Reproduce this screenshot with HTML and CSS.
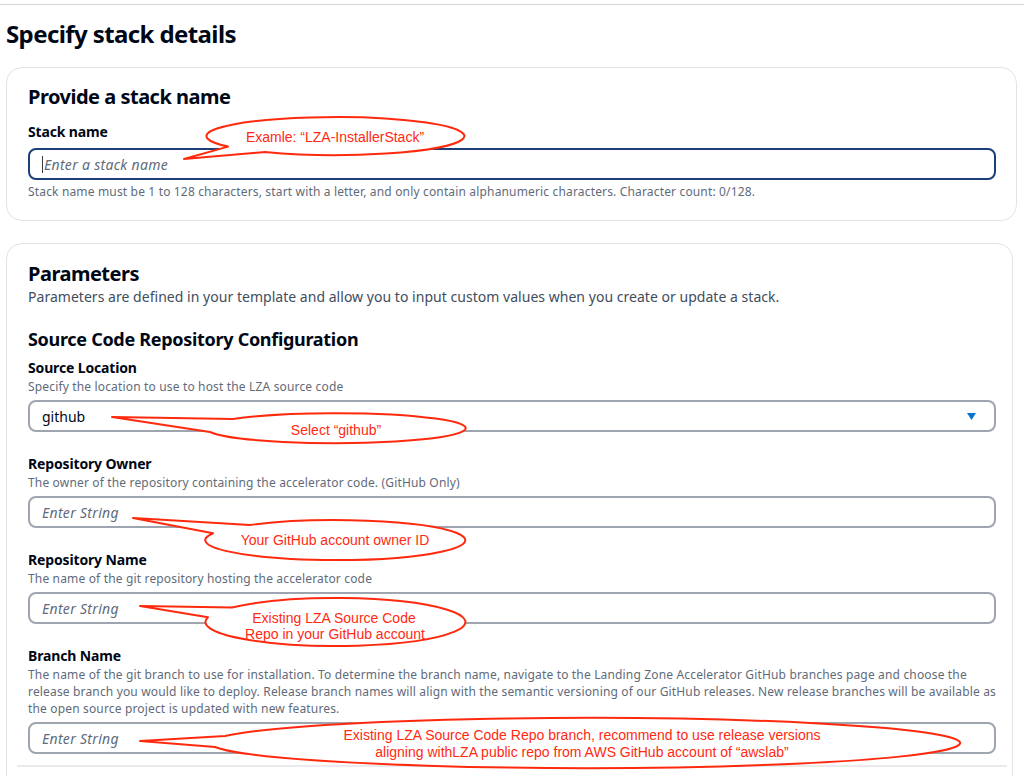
FILE: index.html
```html
<!DOCTYPE html>
<html lang="en">
<head>
<meta charset="utf-8">
<title>Specify stack details</title>
<link rel="stylesheet" href="styles.css">
</head>
<body>
<div class="page">
  <div class="topline"></div>
  <h1 class="title">Specify stack details</h1>

  <section class="card card-name">
    <h2 class="card-title">Provide a stack name</h2>
    <div class="field first">
      <div class="label">Stack name</div>
      <div class="input input-focus"><span class="caret"></span><span class="ph">Enter a stack name</span></div>
      <div class="help">Stack name must be 1 to 128 characters, start with a letter, and only contain alphanumeric characters. Character count: 0/128.</div>
    </div>
  </section>

  <section class="card card-params">
    <h2 class="card-title">Parameters</h2>
    <p class="card-desc">Parameters are defined in your template and allow you to input custom values when you create or update a stack.</p>
    <h3 class="group-title">Source Code Repository Configuration</h3>

    <div class="field">
      <div class="label">Source Location</div>
      <div class="desc">Specify the location to use to host the LZA source code</div>
      <div class="input select"><span class="value">github</span>
        <svg class="arrow" width="9" height="7" viewBox="0 0 9 7"><path d="M0 0H9L4.5 7Z" fill="#0972d3"/></svg>
      </div>
    </div>

    <div class="field">
      <div class="label">Repository Owner</div>
      <div class="desc">The owner of the repository containing the accelerator code. (GitHub Only)</div>
      <div class="input"><span class="ph">Enter String</span></div>
    </div>

    <div class="field">
      <div class="label">Repository Name</div>
      <div class="desc">The name of the git repository hosting the accelerator code</div>
      <div class="input"><span class="ph">Enter String</span></div>
    </div>

    <div class="field">
      <div class="label">Branch Name</div>
      <div class="desc">The name of the git branch to use for installation. To determine the branch name, navigate to the Landing Zone Accelerator GitHub branches page and choose the release branch you would like to deploy. Release branch names will align with the semantic versioning of our GitHub releases. New release branches will be available as the open source project is updated with new features.</div>
      <div class="input"><span class="ph">Enter String</span></div>
    </div>

    <div class="divider"></div>
  </section>

  <svg class="callouts" width="1024" height="776" viewBox="0 0 1024 776">
    <g class="bubble">
      <path d="M228 146.6 L184 159 L265 152 A129 19 0 1 0 228 146.6 Z"/>
      <path d="M233 419 L112 417 L210 432 A130 15 0 1 0 233 419 Z"/>
      <path d="M250 525 L133 518 L213 533.3 A130 20 0 1 0 250 525 Z"/>
      <path d="M232 607.5 L140 606 L208 617.3 A130 24 0 1 0 232 607.5 Z"/>
      <path d="M225 736 L140 741 L215 747 A375 25 0 1 0 225 736 Z"/>
    </g>
    <g class="note">
      <text x="335" y="141.5">Examle: “LZA-InstallerStack”</text>
      <text x="336" y="435">Select “github”</text>
      <text x="335" y="545">Your GitHub account owner ID</text>
      <text x="334" y="622.5">Existing LZA Source Code</text>
      <text x="335" y="639">Repo in your GitHub account</text>
      <text x="582" y="740">Existing LZA Source Code Repo branch, recommend to use release versions</text>
      <text x="582" y="756.5">aligning withLZA public repo from AWS GitHub account of “awslab”</text>
    </g>
  </svg>
</div>
</body>
</html>
```

FILE: styles.css
```css
html, body {
  margin: 0;
  padding: 0;
  background: #ffffff;
  overflow: hidden;
}

body {
  font-family: "Noto Sans", "Open Sans", "Liberation Sans", sans-serif;
  color: #000716;
}

.page {
  position: relative;
  width: 1024px;
  height: 776px;
  overflow: hidden;
}

.topline {
  height: 4px;
  border-bottom: 1px solid #d3d6da;
}

.title {
  margin: 14px 0 0 6px;
  font-size: 24px;
  line-height: 30px;
  font-weight: 700;
  letter-spacing: -0.6px;
}

.card {
  border: 1px solid #e1e3e6;
  border-radius: 16px;
  background: #fff;
}

.card-name {
  margin: 18px 7px 0 6px;
  padding: 16px 20px 20px 21px;
}

.card-params {
  margin: 22px 11px 0 6px;
  padding: 17px 16px 40px 21px;
}

.card-title {
  margin: 0;
  font-size: 20px;
  line-height: 26px;
  font-weight: 700;
  letter-spacing: -0.5px;
}

.card-desc {
  margin: 0;
  font-size: 14px;
  line-height: 20px;
  color: #414d5c;
  letter-spacing: 0.03px;
}

.group-title {
  margin: 20px 0 0;
  font-size: 18px;
  line-height: 24px;
  font-weight: 700;
  letter-spacing: -0.3px;
}

.field {
  margin-top: 22px;
}

.group-title + .field {
  margin-top: 7px;
}

.field.first {
  margin-top: 12px;
}

.label {
  font-size: 14px;
  line-height: 20px;
  font-weight: 700;
  letter-spacing: -0.15px;
}

.desc {
  font-size: 12px;
  line-height: 17px;
  color: #5f6b7a;
  letter-spacing: 0.16px;
}

.help {
  margin-top: 4px;
  font-size: 12px;
  line-height: 16px;
  color: #5f6b7a;
  letter-spacing: 0.16px;
}

.input {
  box-sizing: border-box;
  height: 32px;
  margin-top: 5px;
  display: flex;
  align-items: center;
  padding: 0 12px;
  border: 2px solid #9ea5ae;
  border-radius: 8px;
  font-size: 14px;
  background: #fff;
}

.field.first .input {
  margin-top: 6px;
}

.input-focus {
  border-color: #1d3f77;
}

.ph {
  font-style: italic;
  color: #5f6b7a;
  letter-spacing: 0.3px;
}

.caret {
  width: 1px;
  height: 17px;
  background: #3a3a3a;
  margin-right: 1px;
}

.value {
  color: #000716;
}

.arrow {
  margin-left: auto;
  margin-right: 6px;
}

.divider {
  height: 2px;
  margin: 11px -11px 0 -11px;
  background: #e9ebed;
}

.callouts {
  position: absolute;
  left: 0;
  top: 0;
  pointer-events: none;
}

.bubble path {
  fill: #ffffff;
  stroke: #ff2a0e;
  stroke-width: 2;
  stroke-linejoin: round;
}

.note text {
  font-family: "Liberation Sans", Arial, sans-serif;
  font-size: 14px;
  fill: #ff2a12;
  text-anchor: middle;
}
```
